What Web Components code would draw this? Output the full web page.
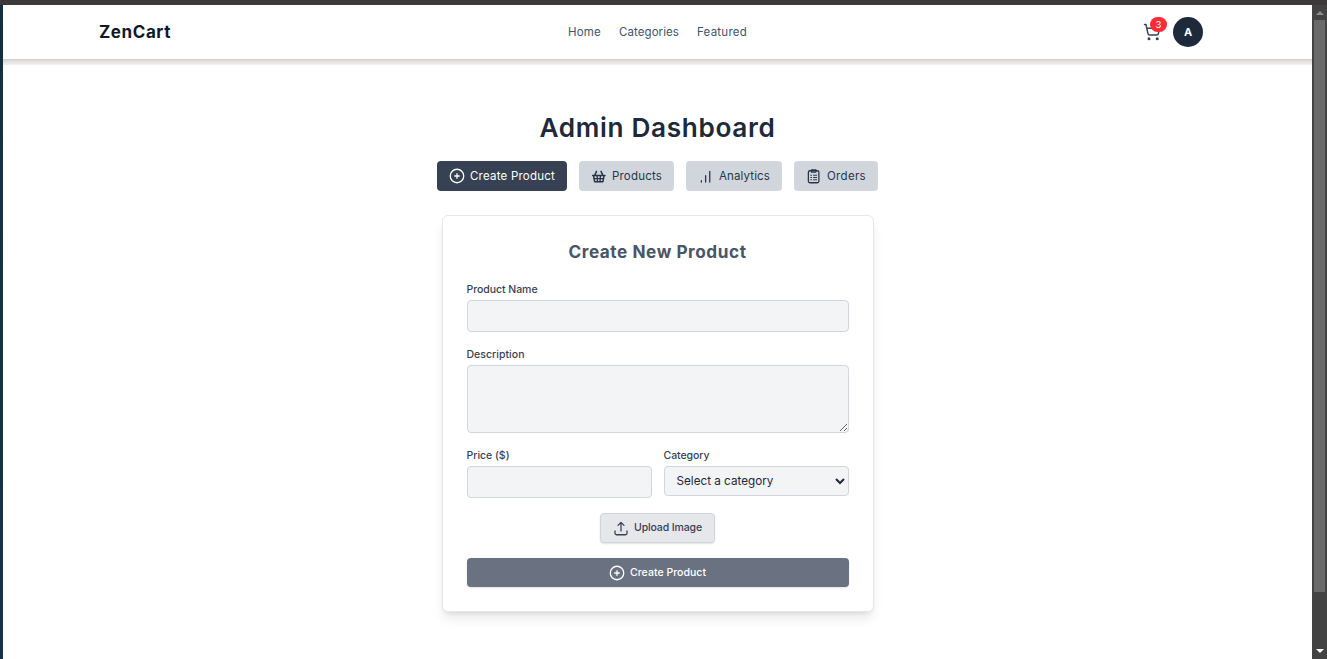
<!DOCTYPE html>
<html lang="en">
<head>
<meta charset="utf-8">
<title>ZenCart</title>
<style>
html,body{margin:0;height:100%;overflow:hidden;background:#fff}
body{font-family:Inter,"Open Sans",sans-serif;color:#1e2939}
</style>
</head>
<body>
<zc-window>
  <zc-header></zc-header>
  <zc-dashboard></zc-dashboard>
</zc-window>
<script>
const define = (name, html, setup) => {
  const t = document.createElement('template');
  t.innerHTML = html;
  customElements.define(name, class extends HTMLElement {
    connectedCallback() {
      if (this.shadowRoot) return;
      this.attachShadow({mode: 'open'}).appendChild(t.content.cloneNode(true));
      if (setup) setup(this, this.shadowRoot);
    }
  });
};

// A line of text tracked so that it fills the width given in its w attribute.
define('zc-text', `<style>
:host{display:inline-block;white-space:nowrap;line-height:1.4}
span{display:inline-block}
</style><span><slot></slot></span>`, (el, root) => {
  const w = parseFloat(el.getAttribute('w'));
  el.style.width = w + 'px';
  const s = root.querySelector('span');
  const n = el.textContent.length;
  s.style.letterSpacing = ((w - s.getBoundingClientRect().width) / n).toFixed(3) + 'px';
});

const icons = {
  plus: '<path d="M12 9v6m3-3H9m12 0a9 9 0 1 1-18 0 9 9 0 0 1 18 0Z"/>',
  upload: '<path d="M4 16v3a2 2 0 0 0 2 2h12a2 2 0 0 0 2-2v-3M8 8.500l4-4 4 4M12 4.500V16"/>',
  cart: '<circle cx="8" cy="21" r="1"/><circle cx="19" cy="21" r="1"/><path d="M2.05 2.05h2l2.66 12.42a2 2 0 0 0 2 1.58h9.78a2 2 0 0 0 1.95-1.57l1.65-7.43H5.12"/>',
  basket: '<g stroke-width="2"><path d="M3.500 11.200h16.400M4.700 11.500l1.500 8.100h11l1.500-8.100M6.500 10.500l2.200-4.700M16.900 10.500l-2.200-4.700"/></g><path d="M5.500 15.400h12.400M9.500 11.500l.5 8M13.900 11.500l-.5 8"/>',
  bars: '<path d="M5.800 20v-1.800M11.500 20v-8.500M17 20V5.700"/>',
  clipboard: '<rect x="4.500" y="5" width="14" height="16" rx="2"/><path d="M8.500 3.700h6v3h-6z"/><path stroke-width="1.300" d="M7.700 11h1M11.300 11h4.200M7.700 14h1M11.300 14h4.200M7.700 17h1M11.300 17h4.200"/>'
};
define('zc-icon', `<style>
:host{display:block;flex:none;width:18px;height:18px}
svg{display:block;width:100%;height:100%;fill:none;stroke:currentColor;stroke-width:var(--sw,1.7);stroke-linecap:round;stroke-linejoin:round}
</style><svg viewBox="0 0 24 24"></svg>`, (el, root) => {
  root.querySelector('svg').innerHTML = icons[el.getAttribute('name')];
});

define('zc-window', `<style>
:host{display:grid;grid-template:5px 1fr / 3px 1fr 15px;width:100vw;height:100vh}
.top{grid-column:1/-1;background:#3b393a}
.left{background:linear-gradient(#14303f,#17324a)}
main{background:#fff;min-width:0;overflow:hidden}
.bar{background:#434343;display:flex;flex-direction:column;align-items:center;box-sizing:border-box;padding:6px 0}
.bar svg{display:block;flex:none}
.thumb{width:11px;height:572px;margin-top:5px;background:#6a6a6a}
.gap{flex:1}
</style><div class="top"></div><div class="left"></div><main><slot></slot></main>
<div class="bar"><svg width="8" height="4"><path d="M4 0 8 4H0z" fill="#8c8c8c"/></svg><div class="thumb"></div><div class="gap"></div><svg width="8" height="4"><path d="M0 0H8L4 4z" fill="#fff"/></svg></div>`);

define('zc-header', `<style>
:host{display:block}
.row{height:54px;box-sizing:border-box;padding:0 109px 0 96px;display:grid;grid-template-columns:1fr auto 1fr;align-items:center}
.brand{font-size:17px;font-weight:650;color:#101828;margin-top:2px}
nav{display:flex;gap:18px;font-size:11.500px;color:#45526a;transform:translateX(6.500px)}
.r{justify-self:end;display:flex;align-items:center;gap:12px}
.cart{position:relative;color:#364153;--sw:2}
.badge{position:absolute;left:7px;top:-6px;width:17px;height:15px;border-radius:8px;background:#fb2c36;color:#fff;font-size:9.500px;line-height:15px;text-align:center}
.av{width:30px;height:30px;border-radius:50%;background:#1e2939;color:#fff;font-size:11px;font-weight:700;line-height:31px;text-align:center}
.shade{height:6px;background:linear-gradient(#cfcccb,#e6e2e1 45%,#f4f1ef)}
</style>
<div class="row"><zc-text class="brand" w="72">ZenCart</zc-text>
<nav><zc-text w="33">Home</zc-text><zc-text w="60">Categories</zc-text><zc-text w="50">Featured</zc-text></nav>
<div class="r"><div class="cart"><zc-icon name="cart"></zc-icon><span class="badge">3</span></div><div class="av">A</div></div></div>
<div class="shade"></div>`);

define('zc-tab', `<style>
:host{display:flex;align-items:center;gap:4px;height:30px;box-sizing:border-box;padding:0 12px 0 11px;border-radius:4px;background:#d1d5dc;color:#2a3648;font-size:11.500px}
:host([active]){background:#364153;color:#fff}
</style><zc-icon></zc-icon><slot></slot>`, (el, root) => {
  const i = root.querySelector('zc-icon');
  const fresh = document.createElement('zc-icon');
  fresh.setAttribute('name', el.getAttribute('icon'));
  i.replaceWith(fresh);
});

define('zc-field', `<style>
:host{display:block}
.label{font-size:10.500px;font-weight:450;color:#364153;height:14px;display:block;margin:1px 0 3px}
.label ::slotted(*){display:block}
</style><div class="label"><slot name="label"></slot></div><slot></slot>`);

define('zc-product-form', `<style>
:host{display:flex;flex-direction:column;width:432px;height:397px;box-sizing:border-box;padding:24px;border:1px solid #e5e7eb;border-radius:6px;background:#fff;box-shadow:0 8px 12px -2px rgba(0,0,0,.1),0 3px 5px -3px rgba(0,0,0,.1)}
.title{align-self:center;font-size:17.200px;font-weight:650;color:#4a5565;line-height:24px;margin-bottom:18px}
input,textarea,select{display:block;box-sizing:border-box;width:100%;margin:0;border:1px solid #d1d5dc;border-radius:4px;background:#f3f4f6;color:#1e2939;font-family:inherit}
input{height:32px}
textarea{height:68px;resize:vertical}
select{height:30px;padding:0 0 0 8px;font-size:11.700px}
.a,.b{margin-bottom:15px}
.two{display:grid;grid-template-columns:185px 185px;gap:12px;align-items:start;margin-bottom:15px}
.btn{display:flex;align-items:center;justify-content:center;box-sizing:border-box;font-size:10.500px;font-weight:450;border-radius:4px;gap:4px;padding-right:1px}
.up{align-self:center;width:115px;height:30px;background:#e5e7eb;border:1px solid #d1d5dc;color:#364153;box-shadow:0 1px 2px rgba(0,0,0,.12)}
.up zc-text{margin-top:1px}
.go{height:29px;margin-top:15px;background:#6a7282;color:#fff;box-shadow:0 1px 2px rgba(0,0,0,.12)}
.go zc-text{margin-top:2px}
</style>
<zc-text class="title" w="178">Create New Product</zc-text>
<zc-field class="a"><zc-text slot="label" w="71">Product Name</zc-text><input></zc-field>
<zc-field class="b"><zc-text slot="label" w="58">Description</zc-text><textarea></textarea></zc-field>
<div class="two">
<zc-field><zc-text slot="label" w="43">Price ($)</zc-text><input></zc-field>
<zc-field><zc-text slot="label" w="46">Category</zc-text><select><option>Select a category</option></select></zc-field>
</div>
<div class="btn up"><zc-icon name="upload"></zc-icon><zc-text w="68">Upload Image</zc-text></div>
<div class="btn go"><zc-icon name="plus"></zc-icon><zc-text w="76">Create Product</zc-text></div>`);

define('zc-dashboard', `<style>
:host{display:flex;flex-direction:column;align-items:center;padding-top:45px}
.h{font-size:26.200px;font-weight:620;line-height:36px;color:#1e2939}
.tabs{display:flex;gap:12px;margin:15px 0 24px}
</style>
<zc-text class="h" w="236">Admin Dashboard</zc-text>
<div class="tabs">
<zc-tab icon="plus" active><zc-text w="85">Create Product</zc-text></zc-tab>
<zc-tab icon="basket"><zc-text w="50">Products</zc-text></zc-tab>
<zc-tab icon="bars"><zc-text w="51">Analytics</zc-text></zc-tab>
<zc-tab icon="clipboard"><zc-text w="39">Orders</zc-text></zc-tab>
</div>
<zc-product-form></zc-product-form>`);
</script>
</body>
</html>
